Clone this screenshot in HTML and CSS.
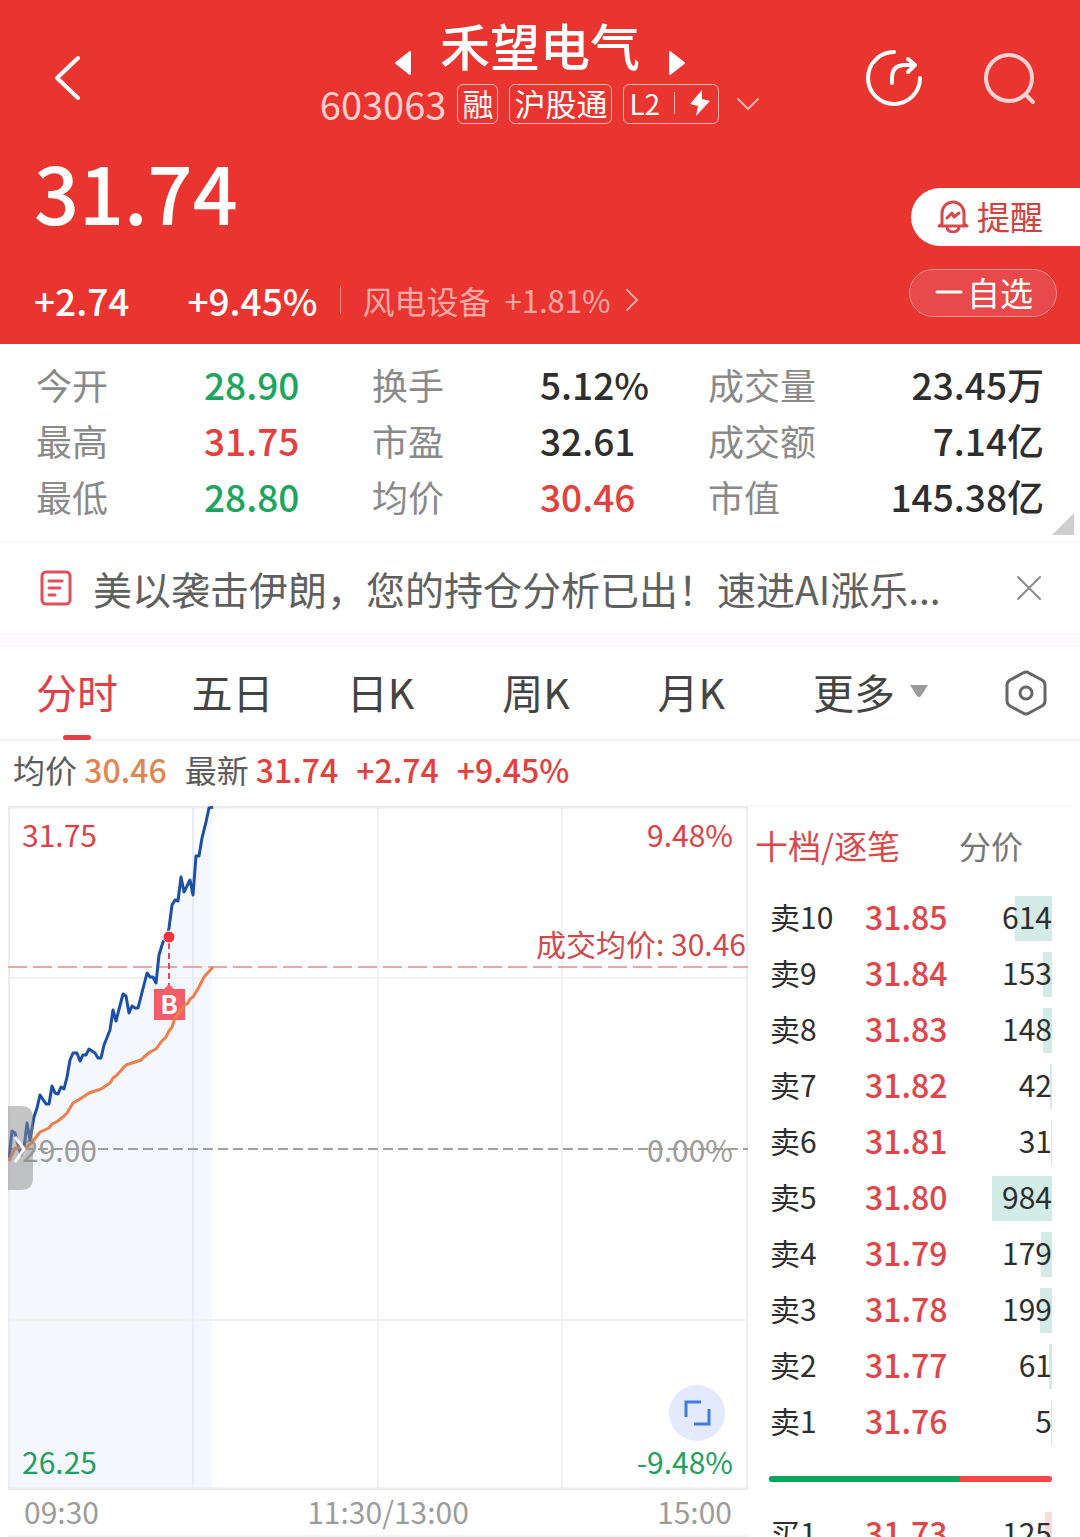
FILE: index.html
```html
<!DOCTYPE html>
<html lang="zh-CN">
<head>
    <meta charset="UTF-8">
    <meta name="viewport" content="width=device-width, initial-scale=1.0">
    <title>禾望电气 603063</title>
    <link rel="stylesheet" href="styles.css">
</head>
<body>
<div class="page">
    <header class="header">
        <div class="topbar">
            <div class="topbar-side">
                <button type="button" class="icon-btn back" aria-label="返回">
                    <svg width="28" height="48" viewBox="0 0 28 48"><path d="M25 4 L4 24 L25 44" fill="none" stroke="#fff" stroke-width="4" stroke-linecap="round" stroke-linejoin="round"/></svg>
                </button>
            </div>
            <div class="stock">
                <div class="stock-title">
                    <button type="button" class="icon-btn" aria-label="上一只">
                        <svg width="18" height="26" viewBox="0 0 18 26"><path d="M16 2 V24 L2 13 Z" fill="#fff" stroke="#fff" stroke-width="2" stroke-linejoin="round"/></svg>
                    </button>
                    <h1>禾望电气</h1>
                    <button type="button" class="icon-btn" aria-label="下一只">
                        <svg width="18" height="26" viewBox="0 0 18 26"><path d="M2 2 V24 L16 13 Z" fill="#fff" stroke="#fff" stroke-width="2" stroke-linejoin="round"/></svg>
                    </button>
                </div>
                <div class="stock-info">
                    <span class="code">603063</span>
                    <span class="tag">融</span>
                    <span class="tag">沪股通</span>
                    <span class="tag tag-level">L2<i></i><svg width="22" height="28" viewBox="0 0 22 28"><path d="M13 1 L1 15 L9 17 L7 27 L21 12 L13 10 Z" fill="#fff"/></svg></span>
                    <svg class="more" width="24" height="14" viewBox="0 0 24 14"><path d="M2 2 L12 12 L22 2" fill="none" stroke="#ffb3b0" stroke-width="2" stroke-linecap="round" stroke-linejoin="round"/></svg>
                </div>
            </div>
            <div class="topbar-side right">
                <button type="button" class="icon-btn" aria-label="分享">
                    <svg width="56" height="56" viewBox="0 0 56 56" fill="none" stroke="#fff" stroke-width="4" stroke-linecap="round" stroke-linejoin="round"><path d="M28 2 A26 26 0 1 0 54 28"/><path d="M26 33 V28 Q26 15 39 15 H48"/><path d="M42 9 L49 15 L42 22"/></svg>
                </button>
                <button type="button" class="icon-btn" aria-label="搜索">
                    <svg width="54" height="54" viewBox="0 0 54 54" fill="none" stroke="#fbd3d2" stroke-width="4" stroke-linecap="round"><circle cx="27" cy="27" r="23"/><path d="M44 44 L51 51"/></svg>
                </button>
            </div>
        </div>

        <div class="quote">
            <div class="quote-left">
                <div class="price">31.74</div>
                <div class="change">
                    <span>+2.74</span>
                    <span>+9.45%</span>
                    <a href="#" class="sector">
                        <span>风电设备</span>
                        <span class="sector-rate">+1.81%</span>
                        <svg width="14" height="24" viewBox="0 0 14 24"><path d="M2 2 L12 12 L2 22" fill="none" stroke="#ffa9a6" stroke-width="2" stroke-linecap="round"/></svg>
                    </a>
                </div>
            </div>
            <div class="quote-right">
                <button type="button" class="remind">
                    <svg width="32" height="34" viewBox="0 0 32 34" fill="none" stroke="#d9484c" stroke-width="3" stroke-linecap="round" stroke-linejoin="round"><path d="M5 25 V14 A11 11 0 0 1 27 14 V25 L30 27 H2 Z"/><path d="M10 28 A6 5 0 0 0 22 28"/><path d="M10 19 L15 14 L17 18 L22 14"/></svg>
                    提醒
                </button>
                <button type="button" class="favor">
                    <svg width="28" height="4" viewBox="0 0 28 4"><path d="M2 2 H26" stroke="#fff" stroke-width="3" stroke-linecap="round"/></svg>
                    自选
                </button>
            </div>
        </div>
    </header>

    <section class="stats">
        <dl>
            <div><dt>今开</dt><dd class="green">28.90</dd></div>
            <div><dt>换手</dt><dd>5.12%</dd></div>
            <div><dt>成交量</dt><dd>23.45万</dd></div>
            <div><dt>最高</dt><dd class="red">31.75</dd></div>
            <div><dt>市盈</dt><dd>32.61</dd></div>
            <div><dt>成交额</dt><dd>7.14亿</dd></div>
            <div><dt>最低</dt><dd class="green">28.80</dd></div>
            <div><dt>均价</dt><dd class="red">30.46</dd></div>
            <div><dt>市值</dt><dd>145.38亿</dd></div>
        </dl>
    </section>

    <section class="news">
        <svg width="32" height="36" viewBox="0 0 32 36" fill="none" stroke="#e0505c" stroke-width="3" stroke-linecap="round"><rect x="2" y="2" width="28" height="32" rx="4"/><path d="M9 11 H22 M9 18 H20 M9 25 H15"/></svg>
        <a href="#">美以袭击伊朗，您的持仓分析已出！速进AI涨乐...</a>
        <button type="button" class="icon-btn" aria-label="关闭">
            <svg width="26" height="26" viewBox="0 0 26 26"><path d="M2 2 L24 24 M24 2 L2 24" stroke="#8c8c8c" stroke-width="2" stroke-linecap="round"/></svg>
        </button>
    </section>

    <nav class="tabs">
        <button type="button" class="tab active">分时</button>
        <button type="button" class="tab">五日</button>
        <button type="button" class="tab">日K</button>
        <button type="button" class="tab">周K</button>
        <button type="button" class="tab">月K</button>
        <button type="button" class="tab">更多<svg width="20" height="14" viewBox="0 0 20 14"><path d="M1 1 H19 L12 12 Q10 14 8 12 Z" fill="#9b999c"/></svg></button>
        <button type="button" class="icon-btn" aria-label="设置">
            <svg width="42" height="46" viewBox="0 0 42 46" fill="none" stroke="#666" stroke-width="3" stroke-linejoin="round"><path d="M18 3 Q21 1 24 3 L37 10 Q40 12 40 15 V31 Q40 34 37 36 L24 43 Q21 45 18 43 L5 36 Q2 34 2 31 V15 Q2 12 5 10 Z"/><circle cx="21" cy="23" r="6"/></svg>
        </button>
    </nav>

    <div class="legend">
        <span>均价 <b class="orange">30.46</b></span>
        <span>最新 <b class="red">31.74</b></span>
        <b class="red">+2.74</b>
        <b class="red">+9.45%</b>
    </div>

    <main class="main">
        <section class="chart">
            <div class="chart-box">
                <svg class="chart-svg" viewBox="0 0 740 684">
                    <!-- area under price -->
                    <path fill="#f5f7fe" d="M1 352 L4 325 L7 327 L13 349 L16 342 L19 317 L22 334 L26 311 L32 289 L38 298 L41 298 L44 280 L50 288 L56 283 L62 254 L65 247 L87 247 L93 252 L102 224 L115 188 L121 207 L130 202 L139 167 L148 177 L151 149 L161 122 L167 94 L173 71 L185 89 L188 50 L201 2 L204 1 V684 H1 Z"/>
                    <!-- grid -->
                    <g stroke="#f2f2f3" stroke-width="2">
                        <path d="M370 0 V684 M554 0 V684 M0 172 H740 M0 514 H740"/>
                        <path d="M185 0 V684" stroke="#e6ebf8"/>
                        <path d="M1 0 V684 M739 0 V684" stroke="#ededf1"/>
                        <path d="M0 1 H740 M0 683 H740" stroke="#ebebed" stroke-width="3"/>
                    </g>
                    <path d="M0 343 H740" stroke="#a0a0a3" stroke-width="2" stroke-dasharray="10 5"/>
                    <path d="M0 161 H740" stroke="#f0a3a7" stroke-width="2" stroke-dasharray="19 6"/>
                    <g class="axis">
                        <text x="14" y="41" fill="#dd4146">31.75</text>
                        <text x="725" y="41" fill="#dd4146" text-anchor="end">9.48%</text>
                        <text x="738" y="150" fill="#cf4a4d" text-anchor="end">成交均价: 30.46</text>
                        <text x="14" y="356" fill="#9c9c9c">29.00</text>
                        <text x="725" y="356" fill="#9c9c9c" text-anchor="end">0.00%</text>
                        <text x="14" y="668" fill="#22a05f">26.25</text>
                        <text x="725" y="668" fill="#22a05f" text-anchor="end">-9.48%</text>
                    </g>
                    <polyline fill="none" stroke="#1b4fa8" stroke-width="3" stroke-linejoin="round" points="1,352 4,325 7,327 13,349 16,342 19,317 22,334 26,311 29,302 32,289 38,298 41,298 44,280 47,287 50,288 53,281 56,283 59,271 62,254 65,247 69,247 72,255 75,249 78,249 81,243 87,247 90,252 93,252 96,239 102,224 105,204 108,215 115,188 118,190 121,207 124,200 127,202 130,202 139,167 142,171 145,171 148,177 151,149 155,136 159,131 161,122 164,99 167,94 170,95 173,71 176,86 182,74 185,89 188,50 191,50 194,32 198,16 201,2 205,1"/>
                    <!-- buy marker -->
                    <path d="M161 137 V179" stroke="#e2495a" stroke-width="2" stroke-dasharray="6 4"/>
                    <circle cx="161" cy="131" r="6" fill="#f5333f" stroke="#fff" stroke-width="1"/>
                    <path d="M146 183 H156 L161 178 L166 183 H177 V214 H146 Z" fill="#f25d69"/>
                    <text x="161" y="208" class="marker" text-anchor="middle">B</text>
                    <polyline fill="none" stroke="#ee7f4b" stroke-width="3" stroke-linejoin="round" points="1,355 7,342 12,342 19,341 25,335 32,326 41,322 44,318 50,315 56,310 59,307 65,297 72,293 81,287 93,283 102,277 105,272 108,270 118,259 133,254 136,251 142,246 148,243 153,236 158,231 161,225 164,221 167,212 177,199 180,197 182,193 185,191 191,181 196,171 205,161"/>
                    <!-- drawer handle -->
                    <path d="M0 300 H13 Q25 300 25 312 V372 Q25 384 13 384 H0 Z" fill="#8c8c8c" fill-opacity="0.5"/>
                    <path d="M7 331 L16 343 L7 356" fill="none" stroke="#fff" stroke-width="3"/>
                </svg>
                <button type="button" class="fullscreen" aria-label="全屏">
                    <svg width="28" height="28" viewBox="0 0 28 28"><path d="M3 18 V3 H18 M11 25 H26 V10" fill="none" stroke="#3f7de0" stroke-width="3"/></svg>
                </button>
            </div>
            <div class="times"><span>09:30</span><span>11:30/13:00</span><span>15:00</span></div>
        </section>

        <section class="book">
            <div class="book-tabs">
                <button type="button" class="active">十档/逐笔</button>
                <button type="button">分价</button>
            </div>
            <table class="orders">
                <tr><th>卖10</th><td>31.85</td><td class="vol"><i style="width: 37px"></i><span>614</span></td></tr>
                <tr><th>卖9</th><td>31.84</td><td class="vol"><i style="width: 9px"></i><span>153</span></td></tr>
                <tr><th>卖8</th><td>31.83</td><td class="vol"><i style="width: 9px"></i><span>148</span></td></tr>
                <tr><th>卖7</th><td>31.82</td><td class="vol"><i style="width: 2px"></i><span>42</span></td></tr>
                <tr><th>卖6</th><td>31.81</td><td class="vol"><i style="width: 1px"></i><span>31</span></td></tr>
                <tr><th>卖5</th><td>31.80</td><td class="vol"><i style="width: 60px"></i><span>984</span></td></tr>
                <tr><th>卖4</th><td>31.79</td><td class="vol"><i style="width: 11px"></i><span>179</span></td></tr>
                <tr><th>卖3</th><td>31.78</td><td class="vol"><i style="width: 12px"></i><span>199</span></td></tr>
                <tr><th>卖2</th><td>31.77</td><td class="vol"><i style="width: 3px"></i><span>61</span></td></tr>
                <tr><th>卖1</th><td>31.76</td><td class="vol"><i style="width: 1px"></i><span>5</span></td></tr>
            </table>
            <div class="ratio"><i style="width: 67.5%"></i></div>
            <table class="orders buy">
                <tr><th>买1</th><td>31.73</td><td class="vol"><i style="width: 7px"></i><span>125</span></td></tr>
            </table>
        </section>
    </main>
</div>
</body>
</html>
```
FILE: styles.css
```css
* {
    box-sizing: border-box;
}

body {
    margin: 0;
    background-color: #fff;
    color: #2e2e2e;
    font-family: "Noto Sans CJK SC", "Noto Sans", sans-serif;
}

button {
    margin: 0;
    padding: 0;
    border: none;
    background: none;
    color: inherit;
    font: inherit;
    cursor: pointer;
}

a {
    color: inherit;
    text-decoration: none;
}

svg {
    display: block;
    flex: none;
}

.page {
    height: 100vh;
    overflow: hidden;
}

.red {
    color: #e3403e;
}

.green {
    color: #1ba55d;
}

.orange {
    color: #e08650;
}

/* header */
.header {
    background-color: #e93430;
    color: #fff;
    padding: 12px 0 20px;
}

.topbar {
    display: grid;
    grid-template-columns: 1fr auto 1fr;
    align-items: center;
    padding: 0 44px;
}

.topbar-side {
    display: flex;
    padding-top: 20px;
}

.topbar-side.right {
    justify-content: flex-end;
    align-items: center;
    gap: 60px;
}

.back {
    margin-left: 9px;
}

.stock {
    display: flex;
    flex-direction: column;
    align-items: center;
    gap: 8px;
}

.stock-title {
    display: flex;
    align-items: flex-end;
    gap: 28px;
    height: 64px;
}

.stock-title h1 {
    margin: 0;
    font-size: 50px;
    font-weight: 500;
    line-height: 64px;
}

.stock-info {
    display: flex;
    align-items: center;
    gap: 11px;
    height: 40px;
}

.code {
    font-size: 38px;
    line-height: 36px;
    color: #ffcfcd;
}

.tag {
    display: flex;
    align-items: center;
    height: 40px;
    padding: 0 4px 2px;
    border: 1px solid #ffb9b7;
    border-radius: 6px;
    font-size: 31px;
    line-height: 36px;
}

.tag-level {
    padding: 0 7px 2px 5px;
    font-size: 28px;
    gap: 14px;
}

.tag-level i {
    width: 1px;
    height: 22px;
    background-color: #ffb9b7;
}

.more {
    margin-left: 6px;
}

.quote {
    display: flex;
    justify-content: space-between;
}

.quote-left {
    padding: 18px 0 0 34px;
}

.price {
    font-size: 79px;
    font-weight: 500;
    line-height: 98px;
}

.change {
    display: flex;
    align-items: center;
    gap: 58px;
    margin-top: 36px;
    font-size: 37px;
    font-weight: 500;
    line-height: 48px;
}

.sector {
    display: flex;
    align-items: center;
    gap: 14px;
    margin-left: -36px;
    color: #ffa9a6;
    font-size: 32px;
    font-weight: 400;
}

.sector-rate {
    font-size: 31px;
}

.sector::before {
    content: "";
    width: 1px;
    height: 28px;
    margin-right: 8px;
    background-color: #f58a87;
}

.quote-right {
    display: flex;
    flex-direction: column;
    align-items: flex-end;
    gap: 23px;
    padding-top: 64px;
}

.remind {
    display: flex;
    align-items: center;
    gap: 8px;
    height: 58px;
    padding: 0 37px 2px 26px;
    border-radius: 29px 0 0 29px;
    background-color: #fff;
    color: #d0413f;
    font-size: 33px;
    line-height: 56px;
}

.favor {
    display: flex;
    align-items: center;
    gap: 4px;
    height: 48px;
    margin-right: 23px;
    padding: 0 23px 2px 25px;
    border: 1px solid #f28a8b;
    border-radius: 24px;
    background-color: #e84a4c;
    font-size: 33px;
    line-height: 44px;
}

/* stats */
.stats {
    position: relative;
    padding: 12px 36px 17px;
    border-bottom: 2px solid #f6f6f7;
}

.stats::after {
    content: "";
    position: absolute;
    right: 6px;
    bottom: 6px;
    border-left: 22px solid transparent;
    border-bottom: 22px solid #cfcfcf;
}

.stats dl {
    display: grid;
    grid-template-columns: 1fr 1fr 1fr;
    margin: 0;
}

.stats dl div {
    display: flex;
    line-height: 56px;
}

.stats dt {
    flex: 1;
    color: #8a8a8a;
    font-size: 36px;
}

.stats dd {
    flex: 1;
    margin: 0;
    font-size: 37px;
    font-weight: 500;
    white-space: nowrap;
}

.stats dl div:nth-child(3n) dd {
    text-align: right;
}

/* news */
.news {
    display: flex;
    align-items: center;
    height: 104px;
    padding: 0 38px 14px 40px;
    box-shadow: inset 0 -14px 0 #fdf9fd;
}

.news a {
    flex: 1;
    margin-left: 21px;
    color: #5f615f;
    font-size: 39px;
    line-height: 56px;
    white-space: nowrap;
}

/* tabs */
.tabs {
    display: grid;
    grid-template-columns: repeat(5, 1fr) 192px 42px;
    align-items: center;
    height: 94px;
    padding: 0 33px 0 36px;
    border-bottom: 2px solid #f4f4f4;
}

.tab {
    position: relative;
    display: flex;
    align-items: center;
    justify-self: start;
    gap: 14px;
    height: 92px;
    padding-bottom: 4px;
    color: #434543;
    font-size: 41px;
}

.tab.active {
    color: #e23e48;
}

.tab.active::after {
    content: "";
    position: absolute;
    left: 50%;
    bottom: -1px;
    width: 28px;
    height: 5px;
    margin-left: -14px;
    border-radius: 3px;
    background-color: #e23e48;
}

/* legend */
.legend {
    display: flex;
    gap: 18px;
    height: 64px;
    padding-left: 13px;
    color: #5c5c5c;
    font-size: 32px;
    line-height: 56px;
}

.legend b {
    font-size: 32px;
    font-weight: 500;
}

/* chart + order book */
.main {
    display: grid;
    grid-template-columns: 740fr 324fr;
    margin: 0 8px;
}

.chart-box {
    position: relative;
    padding-top: 1px;
}

.chart-svg {
    width: 100%;
    height: auto;
}

.axis {
    font-size: 30px;
}

.marker {
    fill: #fff;
    font-size: 26px;
    font-weight: bold;
}

.fullscreen {
    position: absolute;
    right: 23px;
    bottom: 49px;
    display: flex;
    align-items: center;
    justify-content: center;
    width: 56px;
    height: 56px;
    border-radius: 50%;
    background-color: #e3eafd;
}

.times {
    display: grid;
    grid-template-columns: 40% 1fr auto;
    height: 47px;
    padding: 0 16px;
    border-bottom: 2px solid #f4f4f4;
    color: #9c9c9c;
    font-size: 30px;
    line-height: 43px;
}

.book {
    border-top: 2px solid #f6f6f6;
}

.book-tabs {
    display: flex;
    justify-content: space-between;
    padding: 8px 49px 0 7px;
    color: #777;
    font-size: 32px;
    line-height: 60px;
}

.book-tabs .active {
    color: #d9494c;
    font-size: 33px;
}

.orders {
    width: 282px;
    margin: 14px 20px 0 auto;
    border-collapse: collapse;
}

.orders tr {
    height: 56px;
}

.orders th,
.orders td {
    padding: 0 0 2px;
    font-size: 30px;
    font-weight: 400;
    line-height: 44px;
    text-align: left;
}

.orders th {
    width: 95px;
}

.orders td {
    color: #e0454a;
    font-size: 32px;
    font-weight: 500;
}

.orders .vol {
    position: relative;
    color: #2e2e2e;
    font-size: 30px;
    font-weight: 400;
    text-align: right;
}

.vol i {
    position: absolute;
    top: 7px;
    right: 0;
    height: 45px;
    background-color: #d2ebe4;
}

.vol span {
    position: relative;
}

.buy .vol i {
    background-color: #fbdcdc;
}

.ratio {
    height: 6px;
    margin: 27px 20px 0 21px;
    border-radius: 3px;
    background-color: #f44848;
    overflow: hidden;
}

.ratio i {
    display: block;
    height: 6px;
    background-color: #0ca55c;
}

.ratio + .orders {
    margin-top: 23px;
}
```
